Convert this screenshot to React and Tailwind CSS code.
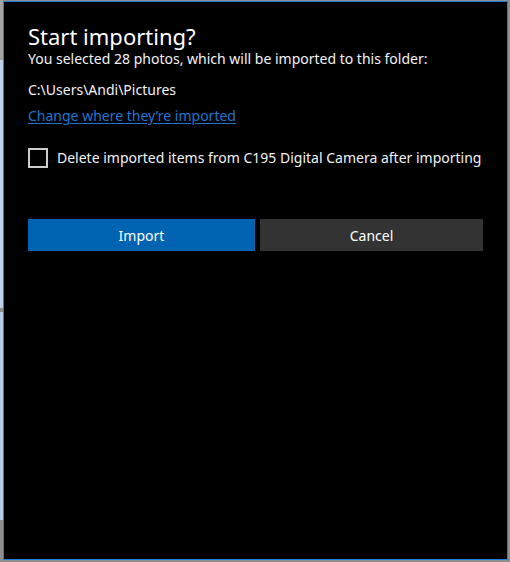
export default function App() {
  return (
    <div className="w-[510px] h-[562px] bg-[#8e8e8e] flex overflow-hidden" style={{ fontFamily: '"Noto Sans", "Open Sans", sans-serif' }}>

      {/* window behind the dialog, only a sliver shows */}
      <div className="w-[3px] flex flex-col shrink-0">
        <div className="h-[60px] bg-[#a3a3a3]"></div>
        <div className="h-[248px] bg-[#bcd2ea]"></div>
        <div className="h-[4px] bg-[#8e8e8e]"></div>
        <div className="h-[208px] bg-[#b6cde6]"></div>
        <div className="flex-1 bg-[#8e8e8e]"></div>
      </div>

      {/* Dialog */}
      <div className="w-[505px] h-[559px] mt-[1px] shrink-0 bg-black border border-[#1f7fe0] px-[24px] text-white">
        <h1 className="text-[22px] leading-[26px] mt-[21px] font-normal">Start importing?</h1>
        <p className="text-[14px] leading-[20px] text-[#f2f2f2]">You selected 28 photos, which will be imported to this folder:</p>
        <p className="text-[14px] leading-[20px] mt-[11px] text-[#f2f2f2]">C:\Users\Andi\Pictures</p>
        <p className="text-[14px] leading-[20px] mt-[6px] text-[#1f76d2] underline underline-offset-2">Change where they’re imported</p>

        <div className="flex items-center gap-[9px] mt-[22px]">
          <div className="w-[20px] h-[20px] border-2 border-[#cccccc]"></div>
          <span className="text-[14px] leading-[20px] text-[#f2f2f2]">Delete imported items from C195 Digital Camera after importing</span>
        </div>

        <div className="flex gap-[5px] mt-[51px]">
          <button className="w-[227px] h-[32px] bg-[#0063b1] text-[14px] text-white">Import</button>
          <button className="w-[223px] h-[32px] bg-[#333333] text-[14px] text-white">Cancel</button>
        </div>
      </div>
    </div>
  )
}
